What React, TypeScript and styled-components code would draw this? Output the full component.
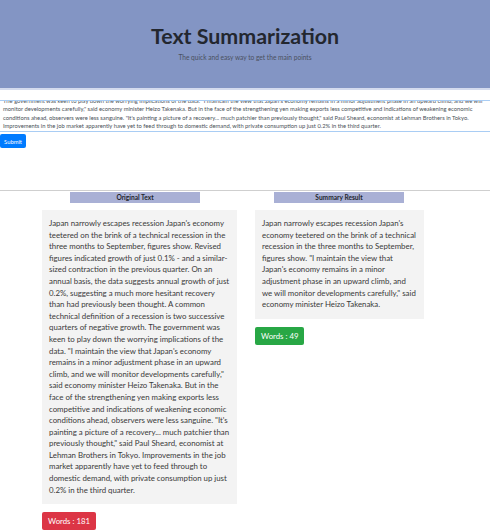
import React, { useEffect, useRef } from "react";
import styled, { createGlobalStyle } from "styled-components";

const GlobalStyle = createGlobalStyle`
  html, body { margin: 0; padding: 0; background: #ffffff; }
  body { font-family: Lato, "Open Sans", "Noto Sans", sans-serif; color: #212529; }
  * { box-sizing: border-box; }
`;

const Page = styled.div`
  width: 490px;
  min-height: 532px;
  overflow: hidden;
`;

const Hero = styled.header`
  height: 90px;
  background: #8395c4;
  border-bottom: 2px solid #d4dbee;
  display: flex;
  flex-direction: column;
  align-items: center;
  padding-top: 23px;
`;

const Title = styled.h1`
  margin: 0;
  font-size: 21.4px;
  line-height: 26px;
  font-weight: 700;
  color: #23272f;
`;

const Lead = styled.p`
  margin: 4px 0 0;
  font-size: 6.6px;
  line-height: 9px;
  color: #4a5060;
`;

const InputForm = styled.form`
  margin-top: 10px;
  display: flex;
  flex-direction: column;
  align-items: flex-start;
`;

const TextInput = styled.textarea`
  display: block;
  width: 100%;
  height: 32px;
  margin: 0;
  padding: 0 3px;
  border: none;
  border-top: 1px solid #a9cdf4;
  border-bottom: 1px solid #a9cdf4;
  font-family: inherit;
  font-size: 5.8px;
  line-height: 8.5px;
  color: #495057;
  resize: none;
  overflow: hidden;
  white-space: pre;
  outline: none;
`;

const SubmitButton = styled.button`
  margin-top: 2px;
  width: 26px;
  height: 14px;
  padding: 0;
  border: none;
  border-radius: 2px;
  background: #007bff;
  color: #ffffff;
  font-family: inherit;
  font-size: 5.8px;
`;

const Divider = styled.hr`
  margin: 42px 0 0;
  border: none;
  border-top: 1px solid #cfcfcf;
`;

const Columns = styled.div`
  display: flex;
  align-items: flex-start;
  gap: 18px;
  padding-left: 42px;
  margin-top: 1px;
`;

const Column = styled.section<{ $width: number; $headOffset: number }>`
  width: ${(p) => p.$width}px;
  display: flex;
  flex-direction: column;
  align-items: flex-start;

  & > h2 {
    margin-left: ${(p) => p.$headOffset}px;
  }
`;

const ColumnHead = styled.h2`
  margin: 0;
  width: 130px;
  height: 11px;
  background: #a9b0d5;
  font-size: 6.6px;
  line-height: 11px;
  font-weight: 700;
  text-align: center;
  color: #23262d;
`;

const Card = styled.div`
  margin-top: 7px;
  width: 100%;
  background: #f3f3f3;
  padding: 8px 7px;
  font-size: 7.85px;
  line-height: 11.6px;
  color: #3a3a3a;
`;

const CardLine = styled.span`
  display: block;
  white-space: nowrap;
`;

const CountBadge = styled.span<{ $tone: "good" | "bad" }>`
  display: inline-block;
  margin-top: 8px;
  padding: 3px 6px;
  border-radius: 2px;
  background: ${(p) => (p.$tone === "good" ? "#28a745" : "#dc3545")};
  color: #ffffff;
  font-size: 7.8px;
  line-height: 12px;
`;

const inputLines = [
  "Japan narrowly escapes recession Japan's economy teetered on the brink of a technical recession in the three months to September, figures show. Revised figures indicated growth of just 0.1% - and a",
  "similar-sized contraction in the previous quarter. On an annual basis, the data suggests annual growth of just 0.2%, suggesting a much more hesitant recovery than had previously been thought.",
  "A common technical definition of a recession is two successive quarters of negative growth.",
  "The government was keen to play down the worrying implications of the data. \"I maintain the view that Japan's economy remains in a minor adjustment phase in an upward climb, and we will",
  "monitor developments carefully,\" said economy minister Heizo Takenaka. But in the face of the strengthening yen making exports less competitive and indications of weakening economic",
  "conditions ahead, observers were less sanguine. \"It's painting a picture of a recovery... much patchier than previously thought,\" said Paul Sheard, economist at Lehman Brothers in Tokyo.",
  "Improvements in the job market apparently have yet to feed through to domestic demand, with private consumption up just 0.2% in the third quarter.",
];

const originalLines = [
  "Japan narrowly escapes recession Japan's economy",
  "teetered on the brink of a technical recession in the",
  "three months to September, figures show. Revised",
  "figures indicated growth of just 0.1% - and a similar-",
  "sized contraction in the previous quarter. On an",
  "annual basis, the data suggests annual growth of just",
  "0.2%, suggesting a much more hesitant recovery",
  "than had previously been thought. A common",
  "technical definition of a recession is two successive",
  "quarters of negative growth. The government was",
  "keen to play down the worrying implications of the",
  "data. \"I maintain the view that Japan's economy",
  "remains in a minor adjustment phase in an upward",
  "climb, and we will monitor developments carefully,\"",
  "said economy minister Heizo Takenaka. But in the",
  "face of the strengthening yen making exports less",
  "competitive and indications of weakening economic",
  "conditions ahead, observers were less sanguine. \"It's",
  "painting a picture of a recovery... much patchier than",
  "previously thought,\" said Paul Sheard, economist at",
  "Lehman Brothers in Tokyo. Improvements in the job",
  "market apparently have yet to feed through to",
  "domestic demand, with private consumption up just",
  "0.2% in the third quarter.",
];

const summaryLines = [
  "Japan narrowly escapes recession Japan's",
  "economy teetered on the brink of a technical",
  "recession in the three months to September,",
  "figures show. \"I maintain the view that",
  "Japan's economy remains in a minor",
  "adjustment phase in an upward climb, and",
  "we will monitor developments carefully,\" said",
  "economy minister Heizo Takenaka.",
];

export default function App() {
  const areaRef = useRef<HTMLTextAreaElement>(null);

  useEffect(() => {
    const el = areaRef.current;
    if (el) el.scrollTop = el.scrollHeight;
  }, []);

  return (
    <Page>
      <GlobalStyle />
      <Hero>
        <Title>Text Summarization</Title>
        <Lead>The quick and easy way to get the main points</Lead>
      </Hero>
      <InputForm onSubmit={(e) => e.preventDefault()}>
        <TextInput ref={areaRef} defaultValue={inputLines.join("\n")} />
        <SubmitButton type="submit">Submit</SubmitButton>
      </InputForm>
      <Divider />
      <Columns>
        <Column $width={195} $headOffset={28}>
          <ColumnHead>Original Text</ColumnHead>
          <Card>
            {originalLines.map((line, i) => (
              <CardLine key={i}>{line}</CardLine>
            ))}
          </Card>
          <CountBadge $tone="bad">Words : 181</CountBadge>
        </Column>
        <Column $width={169} $headOffset={19}>
          <ColumnHead>Summary Result</ColumnHead>
          <Card>
            {summaryLines.map((line, i) => (
              <CardLine key={i}>{line}</CardLine>
            ))}
          </Card>
          <CountBadge $tone="good">Words : 49</CountBadge>
        </Column>
      </Columns>
    </Page>
  );
}
